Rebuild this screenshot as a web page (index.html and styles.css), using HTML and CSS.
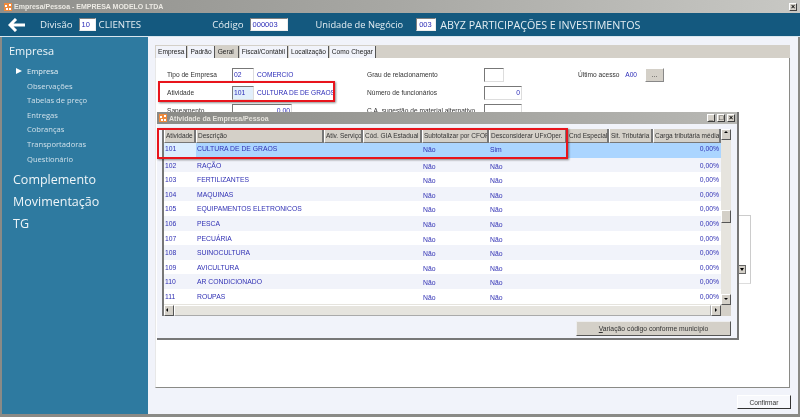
FILE: index.html
```html
<!DOCTYPE html>
<html lang="pt">
<head>
<meta charset="utf-8">
<title>Empresa/Pessoa</title>
<link rel="stylesheet" href="styles.css">
</head>
<body>
<div class="window">
  <div class="titlebar">
    <svg class="appicon" viewBox="0 0 8 8"><rect width="8" height="8" fill="#f08a3c"/><path d="M1 2h2v2H1zM5 1h2v2H5zM2 5h2v2H2zM5 5h2v2H5z" fill="#fff"/></svg>
    <span class="titletext">Empresa/Pessoa - EMPRESA MODELO LTDA</span>
    <span class="winbtn">×</span>
  </div>
  <div class="header">
    <svg class="back" viewBox="0 0 18 14"><path d="M8 1 2 7l6 6M2.500 7H17" fill="none" stroke="#fff" stroke-width="3"/></svg>
    <span class="h-label h-div">Divisão</span>
    <span class="h-input h-i1">10</span>
    <span class="h-label h-cli">CLIENTES</span>
    <span class="h-label h-cod">Código</span>
    <span class="h-input h-i2">000003</span>
    <span class="h-label h-uni">Unidade de Negócio</span>
    <span class="h-input h-i3">003</span>
    <span class="h-label h-big">ABYZ PARTICIPAÇÕES E INVESTIMENTOS</span>
  </div>
  <div class="main">
    <nav class="sidebar">
      <div class="nav-head nav-top">Empresa</div>
      <ul class="nav-list">
        <li class="nav-item nav-current">Empresa</li>
        <li class="nav-item">Observações</li>
        <li class="nav-item">Tabelas de preço</li>
        <li class="nav-item">Entregas</li>
        <li class="nav-item">Cobranças</li>
        <li class="nav-item">Transportadoras</li>
        <li class="nav-item">Questionário</li>
      </ul>
      <div class="nav-head nav-group">Complemento</div>
      <div class="nav-head nav-group">Movimentação</div>
      <div class="nav-head nav-group">TG</div>
    </nav>
    <section class="content">
      <div class="tabs">
        <span class="tab">Empresa</span>
        <span class="tab">Padrão</span>
        <span class="tab tab-on">Geral</span>
        <span class="tab">Fiscal/Contábil</span>
        <span class="tab">Localização</span>
        <span class="tab">Como Chegar</span>
      </div>
      <div class="panel">
        <div class="form">
          <span class="f-label">Tipo de Empresa</span>
          <div class="f-field"><span class="f-input w22">02</span><span class="f-link">COMERCIO</span></div>
          <span class="f-label">Grau de relacionamento</span>
          <div class="f-field"><span class="f-input w20"></span></div>
          <span class="f-label">Último acesso <span class="f-val">A00</span></span>
          <span class="f-btn">...</span>

          <span class="f-label">Atividade</span>
          <div class="f-field"><span class="f-input w22 f-focus">101</span><span class="f-link">CULTURA DE DE GRAOS</span></div>
          <span class="f-label">Número de funcionários</span>
          <div class="f-field"><span class="f-input w38 f-right">0</span></div>
          <span></span><span></span>

          <span class="f-label">Saneamento</span>
          <div class="f-field"><span class="f-input w60 f-right">0,00</span></div>
          <span class="f-label">C.A. sugestão de material alternativo</span>
          <div class="f-field"><span class="f-input w38"></span></div>
          <span></span><span></span>
        </div>
        <div class="groupbox"><span class="combo-arrow"></span></div>
      </div>
      <div class="footer"><button class="confirm" type="button">Confirmar</button></div>

      <div class="hl hl-atividade"></div>

      <div class="dialog">
        <div class="dlg-title">
          <svg class="appicon" viewBox="0 0 8 8"><rect width="8" height="8" fill="#f08a3c"/><path d="M1 2h2v2H1zM5 1h2v2H5zM2 5h2v2H2zM5 5h2v2H5z" fill="#fff"/></svg>
          <span class="titletext">Atividade da Empresa/Pessoa</span>
          <span class="winbtn">_</span><span class="winbtn">□</span><span class="winbtn">×</span>
        </div>
        <div class="grid">
          <div class="grid-left">
            <div class="row row-head">
              <span class="c c1">Atividade</span><span class="c c2">Descrição</span><span class="c c3">Ativ. Serviço</span><span class="c c4">Cód. GIA Estadual</span><span class="c c5">Subtotalizar por CFOP</span><span class="c c6">Desconsiderar UFxOper.</span><span class="c c7">Cnd Especial</span><span class="c c8">Sit. Tributária</span><span class="c c9">Carga tributária média</span>
            </div>
            <div class="row row-sel"><span class="c c1 cell-focus">101</span><span class="c c2">CULTURA DE DE GRAOS</span><span class="c c3"></span><span class="c c4"></span><span class="c c5">Não</span><span class="c c6">Sim</span><span class="c c7"></span><span class="c c8"></span><span class="c c9">0,00%</span></div>
            <div class="row"><span class="c c1">102</span><span class="c c2">RAÇÃO</span><span class="c c3"></span><span class="c c4"></span><span class="c c5">Não</span><span class="c c6">Não</span><span class="c c7"></span><span class="c c8"></span><span class="c c9">0,00%</span></div>
            <div class="row"><span class="c c1">103</span><span class="c c2">FERTILIZANTES</span><span class="c c3"></span><span class="c c4"></span><span class="c c5">Não</span><span class="c c6">Não</span><span class="c c7"></span><span class="c c8"></span><span class="c c9">0,00%</span></div>
            <div class="row"><span class="c c1">104</span><span class="c c2">MAQUINAS</span><span class="c c3"></span><span class="c c4"></span><span class="c c5">Não</span><span class="c c6">Não</span><span class="c c7"></span><span class="c c8"></span><span class="c c9">0,00%</span></div>
            <div class="row"><span class="c c1">105</span><span class="c c2">EQUIPAMENTOS ELETRONICOS</span><span class="c c3"></span><span class="c c4"></span><span class="c c5">Não</span><span class="c c6">Não</span><span class="c c7"></span><span class="c c8"></span><span class="c c9">0,00%</span></div>
            <div class="row"><span class="c c1">106</span><span class="c c2">PESCA</span><span class="c c3"></span><span class="c c4"></span><span class="c c5">Não</span><span class="c c6">Não</span><span class="c c7"></span><span class="c c8"></span><span class="c c9">0,00%</span></div>
            <div class="row"><span class="c c1">107</span><span class="c c2">PECUÁRIA</span><span class="c c3"></span><span class="c c4"></span><span class="c c5">Não</span><span class="c c6">Não</span><span class="c c7"></span><span class="c c8"></span><span class="c c9">0,00%</span></div>
            <div class="row"><span class="c c1">108</span><span class="c c2">SUINOCULTURA</span><span class="c c3"></span><span class="c c4"></span><span class="c c5">Não</span><span class="c c6">Não</span><span class="c c7"></span><span class="c c8"></span><span class="c c9">0,00%</span></div>
            <div class="row"><span class="c c1">109</span><span class="c c2">AVICULTURA</span><span class="c c3"></span><span class="c c4"></span><span class="c c5">Não</span><span class="c c6">Não</span><span class="c c7"></span><span class="c c8"></span><span class="c c9">0,00%</span></div>
            <div class="row"><span class="c c1">110</span><span class="c c2">AR CONDICIONADO</span><span class="c c3"></span><span class="c c4"></span><span class="c c5">Não</span><span class="c c6">Não</span><span class="c c7"></span><span class="c c8"></span><span class="c c9">0,00%</span></div>
            <div class="row"><span class="c c1">111</span><span class="c c2">ROUPAS</span><span class="c c3"></span><span class="c c4"></span><span class="c c5">Não</span><span class="c c6">Não</span><span class="c c7"></span><span class="c c8"></span><span class="c c9">0,00%</span></div>
            <div class="hscroll"><span class="sb-btn sb-left"></span><span class="hs-thumb"></span><span class="sb-btn sb-right"></span></div>
          </div>
          <div class="vscroll"><span class="sb-btn sb-up"></span><span class="vs-track"></span><span class="vs-thumb"></span><span class="vs-track2"></span><span class="sb-btn sb-down"></span><span class="sb-corner"></span></div>
        </div>
        <div class="dlg-foot"><button class="variation" type="button"><u>V</u>ariação código conforme município</button></div>
      </div>

      <div class="hl hl-grid"></div>
    </section>
  </div>
</div>
</body>
</html>
```
FILE: styles.css
```css
* { box-sizing: border-box; }
html, body { margin: 0; padding: 0; background: #f1f3fa; }
body { font-family: "Liberation Sans", Arial, sans-serif; overflow: hidden; }

.window {
  width: 800px; height: 417px; display: flex; flex-direction: column;
  border-left: 2px solid #8a8a86; border-right: 2px solid #8a8a86; border-bottom: 3px solid #8a8a86;
  background: #f1f3fa; filter: blur(0.35px);
}

.titlebar {
  height: 13px; flex: none; margin: 0 -2px; padding: 0 3px 0 4px; display: flex; align-items: center; gap: 2px;
  background: linear-gradient(90deg, #8f8f8b, #a8a8a4 50%, #c8c8c4);
}
.appicon { width: 8px; height: 8px; flex: none; }
.titletext { font-size: 7px; font-weight: 700; color: #eceae4; flex: 1; white-space: nowrap; }
.winbtn {
  width: 8px; height: 8px; flex: none; background: #d4d0c8; border: 1px solid; border-color: #fff #404040 #404040 #fff;
  font-size: 7px; line-height: 5px; text-align: center; color: #000; font-weight: 700;
}

.header {
  height: 24px; flex: none; margin: 0 -2px 0 -2px; padding: 0 0 0 8px; display: flex; align-items: center;
  background: #14597f; border-bottom: 1px solid #d8e6ee;
}
.back { width: 18px; height: 14px; margin-right: 14px; flex: none; }
.h-label { font-family: "Open Sans", sans-serif; font-size: 9.700px; color: #e4eef3; white-space: nowrap; }
.h-input {
  height: 13px; background: #fff; border: 1px solid; border-color: #808080 #eee #eee #808080;
  font-family: "Liberation Sans", sans-serif; font-size: 7.500px; line-height: 11px; color: #2c2cb8; padding-left: 2px; flex: none;
}
.h-div { margin-right: 6px; }
.h-i1 { width: 17px; margin-right: 3px; }
.h-cli { margin-right: 71px; }
.h-cod { margin-right: 6px; }
.h-i2 { width: 38px; margin-right: 28px; }
.h-uni { margin-right: 13px; font-size: 9.300px; }
.h-i3 { width: 20px; margin-right: 4px; }
.h-big { font-size: 10.700px; }

.main { flex: 1; display: flex; min-height: 0; }

.sidebar { width: 146px; flex: none; background: #2e7aa0; padding-top: 5px; color: #e8f1f5; font-family: "Open Sans", sans-serif; }
.nav-head { font-size: 12.500px; line-height: 18px; padding-left: 7px; height: 22px; color: #eef5f8; }
.nav-top { font-size: 11px; height: 20px; }
.nav-list { list-style: none; margin: 0; padding: 2px 0 5px 25px; }
.nav-item { font-size: 7.600px; line-height: 14.600px; height: 14.600px; color: #cfe0ea; position: relative; }
.nav-current { color: #e8f1f5; }
.nav-current::before {
  content: ""; position: absolute; left: -11px; top: 4px;
  border-left: 6px solid #fff; border-top: 3.500px solid transparent; border-bottom: 3.500px solid transparent;
}
.nav-group { margin-top: 0; padding-left: 11px; }

.content { flex: 1; position: relative; padding: 8px 8px 0 7px; display: flex; flex-direction: column; min-width: 0; }

.tabs { height: 13px; flex: none; display: flex; background: #d4d0c8; padding: 1px 0 0 1px; }
.tab {
  font-size: 6.600px; line-height: 11px; padding: 0 2px; color: #222; white-space: nowrap;
  background: #f1f3fa; border-right: 1px solid #555; margin-right: 1px; height: 12px;
}
.tab-on { background: #d4d0c8; padding: 0 4px 0 2px; }

.panel {
  height: 330px; flex: none; position: relative; background: #fff;
  border-right: 1px solid #8a8a86; border-bottom: 1px solid #8a8a86; border-left: 1px solid #e8e8e8;
}
.form {
  display: grid; grid-template-columns: 65px 135px 117px 94px 67px 30px; grid-auto-rows: 18px;
  padding: 10px 0 0 11px; height: 54px; overflow: visible;
}
.f-label { font-size: 6.600px; line-height: 14px; color: #333; white-space: nowrap; }
.f-val { color: #2c2cb8; margin-left: 4px; }
.f-field { display: flex; align-items: flex-start; gap: 3px; }
.f-input {
  height: 14px; display: block; background: #fff; border: 1px solid; border-color: #777 #ddd #ddd #777;
  font-size: 6.800px; line-height: 12px; color: #2c2cb8; padding: 0 1px; flex: none;
}
.w20 { width: 20px; } .w22 { width: 22px; } .w38 { width: 38px; } .w60 { width: 60px; }
.f-right { text-align: right; }
.f-focus { background: #e2effb; }
.f-link { font-size: 6.600px; line-height: 14px; color: #2c2cb8; white-space: nowrap; }
.f-btn {
  width: 19px; height: 14px; background: #d4d0c8; border: 1px solid; border-color: #fff #888 #888 #fff;
  font-size: 7px; line-height: 11px; text-align: center; color: #333;
}
.groupbox {
  position: absolute; right: 38px; top: 157px; width: 14px; height: 69px;
  border: 1px solid #ccc; border-left: 0; border-bottom-color: #ddd;
}
.combo-arrow {
  position: absolute; left: 1px; top: 49px; width: 8px; height: 9px; background: #d4d0c8;
  border: 1px solid #666;
}
.combo-arrow::after {
  content: ""; position: absolute; left: 1px; top: 2px;
  border-top: 3px solid #000; border-left: 2px solid transparent; border-right: 2px solid transparent;
}

.footer { display: flex; justify-content: flex-end; padding-top: 7px; margin-right: -1px; }
.confirm {
  width: 54px; height: 14px; padding: 0; background: #f7f8fc; border: 1px solid; border-color: #fff #333 #333 #fff;
  font-family: inherit; font-size: 6.600px; line-height: 11px; color: #333;
}

.hl { position: absolute; border: 2px solid #e8141c; box-shadow: 1px 1px 2px rgba(0,0,0,.45); }
.hl-atividade { left: 10px; top: 44px; width: 177px; height: 21px; }
.hl-grid { left: 9px; top: 91px; width: 411px; height: 31px; }

.dialog {
  position: absolute; left: 9px; top: 75px; width: 582px; height: 228px; background: #f1f3fa;
  border-right: 2px solid #777; border-bottom: 2px solid #777; display: flex; flex-direction: column;
}
.dlg-title {
  height: 12px; flex: none; display: flex; align-items: center; gap: 2px; padding: 0 2px 0 2px;
  background: linear-gradient(90deg, #8a8a86, #b8b8b4);
}
.dlg-title .titletext { color: #e4e2dc; }
.grid { margin: 5px 6px 0 5px; height: 187px; flex: none; display: flex; background: #e6e4de; border-left: 2px solid #777; }
.grid-left { width: 557px; flex: none; overflow: hidden; display: flex; flex-direction: column; }
.row { display: flex; height: 14.600px; flex: none; background: #fff; font-size: 6.800px; line-height: 15px; color: #3030b4; }
.row:nth-child(odd) { background: #f1f3fa; }
.row .c { padding-left: 1px; white-space: nowrap; overflow: hidden; flex: none; }
.row-head.row { background: #d4d0c8; height: 14px; color: #333; font-size: 6.500px; }
.row-head .c { border-right: 2px solid #777; border-left: 1px solid #fff; border-bottom: 1px solid #777; line-height: 13px; padding-left: 1px; }
.row-sel.row { background: #abd5ff; line-height: 12px; }
.cell-focus { background: #dceeff; }
.c1 { width: 32px; }
.c2 { width: 128px; }
.c3 { width: 39px; }
.c4 { width: 59px; }
.c5 { width: 67px; }
.c6 { width: 78px; }
.c7 { width: 42px; }
.c8 { width: 44px; }
.c9 { width: 68px; }
.row:not(.row-head) .c9 { text-align: right; padding-right: 2px; }
.row:not(.row-head) .c5, .row:not(.row-head) .c6 { padding-top: 1px; }

.sb-btn {
  width: 10px; height: 11px; flex: none; display: block; position: relative; background: #d4d0c8;
  border: 1px solid; border-color: #fff #555 #555 #fff;
}
.sb-btn::after { content: ""; position: absolute; left: 2px; top: 2px; border: 2.500px solid transparent; }
.sb-up::after { border-bottom-color: #000; top: -1px; }
.sb-down::after { border-top-color: #000; top: 3px; }
.sb-left::after { border-right-color: #000; left: -1px; }
.sb-right::after { border-left-color: #000; left: 3px; }
.hscroll { height: 11px; flex: none; margin-top: auto; display: flex; background: #e6e4de; }
.hs-thumb { flex: 1; background: #e6e4de; border: 1px solid; border-color: #fff #aaa #aaa #fff; }
.vscroll { width: 10px; flex: none; display: flex; flex-direction: column; background: #e6e4de; }
.vs-track { height: 70px; flex: none; }
.vs-thumb { height: 13px; flex: none; background: #d4d0c8; border: 1px solid; border-color: #fff #555 #555 #fff; }
.vs-track2 { flex: 1; }
.sb-corner { height: 11px; flex: none; background: #d4d0c8; }

.dlg-foot { display: flex; justify-content: flex-end; padding: 5px 6px 0 0; }
.variation {
  width: 155px; height: 15px; padding: 0; background: #d4d0c8; border: 1px solid; border-color: #eee #555 #555 #eee;
  font-family: inherit; font-size: 6.800px; line-height: 12px; color: #333;
}
```
